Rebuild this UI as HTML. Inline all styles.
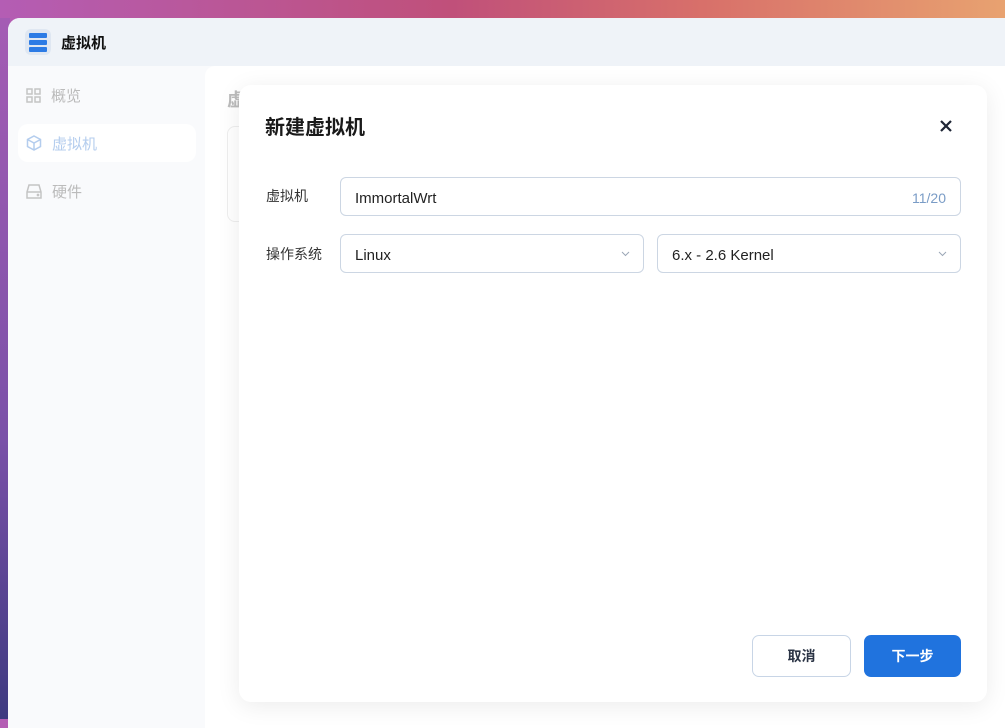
<!DOCTYPE html>
<html><head><meta charset="utf-8"><style>
*{margin:0;padding:0;box-sizing:border-box}
body{width:1005px;height:719px;overflow:hidden;position:relative;font-family:"Liberation Sans","Noto Sans CJK SC",sans-serif;background:linear-gradient(90deg,#b45db4 0%,#c0507a 45%,#d8706a 70%,#e8a270 100%)}
.left{position:absolute;left:0;top:18px;width:10px;height:701px;background:linear-gradient(180deg,#a45cb4,#7a50a8 60%,#3e3a80)}
.win{position:absolute;left:8px;top:18px;width:1010px;height:710px;border-radius:12px 0 0 0;background:#f9fafc;overflow:hidden}
.hdr{height:48px;background:#eff3f8;display:flex;align-items:center;padding-left:17px}
.logo{width:26px;height:26px;border-radius:6px;background:#dfe7f2;display:flex;flex-direction:column;justify-content:center;align-items:center;gap:2px}
.logo i{display:block;width:18px;height:5px;background:#2c7be5;border-radius:1px}
.ttl{margin-left:10px;font-size:15px;font-weight:bold;color:#111}
.nav{position:absolute;left:10px;width:178px;height:38px;display:flex;align-items:center;padding-left:8px;font-size:15px;color:#bbb}
.nav svg{margin-right:10px}
.content{position:absolute;left:197px;top:48px;right:0;bottom:0;background:#fff;border-radius:10px 0 0 0}
.modal{position:absolute;left:239px;top:85px;width:748px;height:617px;background:#fff;border-radius:12px;box-shadow:0 4px 24px rgba(0,0,0,.08)}
.h{position:absolute;left:26px;top:26px;font-size:20px;font-weight:bold;color:#1a1a1a}
.x{position:absolute;left:700px;top:34px}
.lbl{position:absolute;left:27px;font-size:14px;color:#333}
.inp{position:absolute;height:39px;border:1px solid #ccd6e3;border-radius:6px;font-size:15px;color:#222;display:flex;align-items:center;padding-left:14px;padding-top:3px}
.chev{position:absolute;right:13px;top:16px}
.btn{position:absolute;top:550px;height:42px;border-radius:7px;font-size:14px;font-weight:bold;display:flex;align-items:center;justify-content:center}
</style></head><body>
<div class="left"></div>
<div class="win">
<div class="hdr"><div class="logo"><i></i><i></i><i></i></div><div class="ttl">虚拟机</div></div>
<div class="nav" style="top:58px"><svg width="15" height="15" viewBox="0 0 15 15" fill="none" stroke="#c4c4c4" stroke-width="1.5"><rect x="1" y="1" width="5" height="5"/><rect x="9" y="1" width="5" height="5"/><rect x="1" y="9" width="5" height="5"/><rect x="9" y="9" width="5" height="5"/></svg>概览</div>
<div class="nav" style="top:106px;background:#fff;border-radius:10px;color:#b4cdee"><svg width="16" height="16" viewBox="0 0 16 16" fill="none" stroke="#b4cdee" stroke-width="1.5"><path d="M8 1L14.5 4.5V11.5L8 15L1.5 11.5V4.5Z M1.5 4.5L8 8L14.5 4.5 M8 8V15"/></svg>虚拟机</div>
<div class="nav" style="top:154px"><svg width="16" height="15" viewBox="0 0 16 15" fill="none" stroke="#c4c4c4" stroke-width="1.5"><path d="M3 1H13L15 8V14H1V8Z M1 8H15"/><circle cx="12" cy="11" r=".6"/></svg>硬件</div>
<div class="content"><div style="position:absolute;left:22px;top:20px;font-size:18px;color:#bbb;font-weight:bold">虚</div><div style="position:absolute;left:22px;top:60px;width:40px;height:96px;border:1px solid #eee;border-radius:8px"></div></div>
</div>
<div class="modal">
<div class="h">新建虚拟机</div>
<svg class="x" width="14" height="14" viewBox="0 0 14 14"><path d="M2 2L12 12M12 2L2 12" stroke="#1e2535" stroke-width="2.2"/></svg>
<div class="lbl" style="top:101px">虚拟机</div>
<div class="inp" style="left:101px;top:92px;width:621px">ImmortalWrt<span style="position:absolute;right:14px;top:12px;color:#7a9cc6;font-size:14px">11/20</span></div>
<div class="lbl" style="top:159px">操作系统</div>
<div class="inp" style="left:101px;top:149px;width:304px">Linux<svg class="chev" width="9" height="6" viewBox="0 0 9 6"><path d="M1 1L4.5 4.5L8 1" stroke="#9aa6b6" fill="none"/></svg></div>
<div class="inp" style="left:418px;top:149px;width:304px">6.x - 2.6 Kernel<svg class="chev" width="9" height="6" viewBox="0 0 9 6"><path d="M1 1L4.5 4.5L8 1" stroke="#9aa6b6" fill="none"/></svg></div>
<div class="btn" style="left:513px;width:99px;border:1px solid #c8d5e6;color:#2a3344">取消</div>
<div class="btn" style="left:625px;width:97px;background:#2073de;color:#fff">下一步</div>
</div>
</body></html>
